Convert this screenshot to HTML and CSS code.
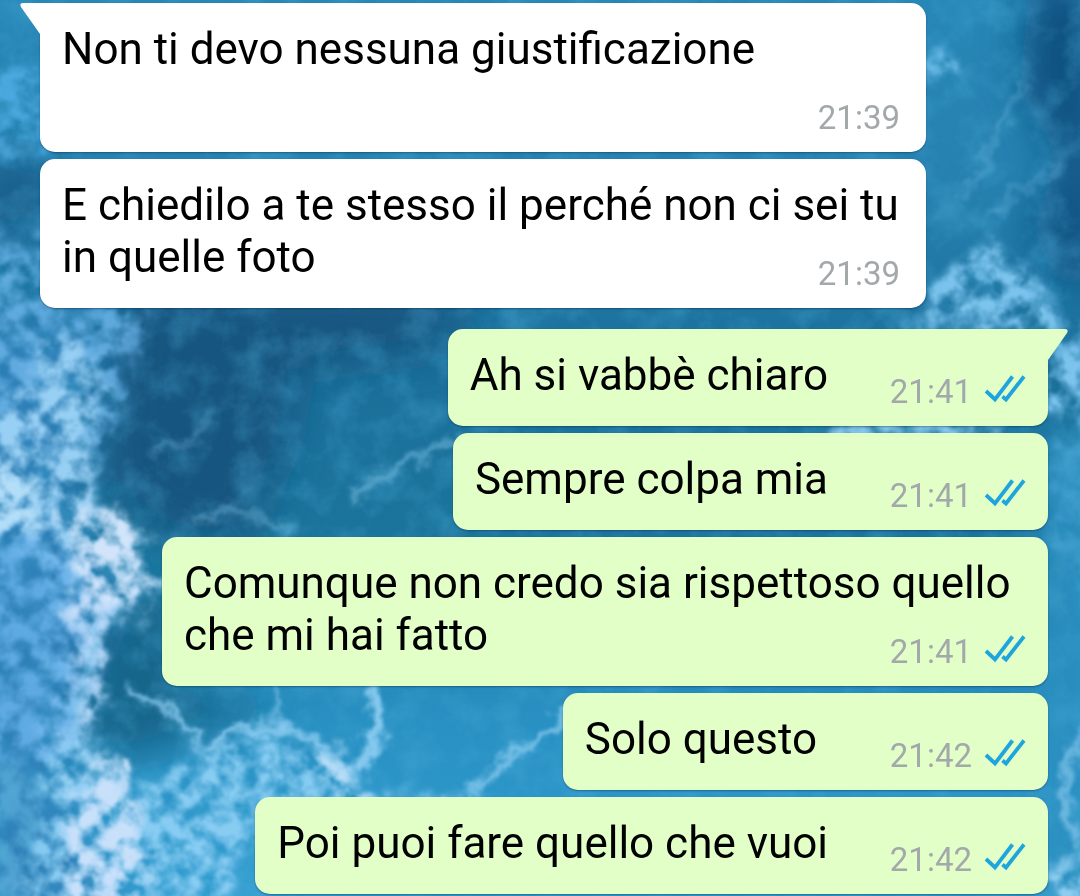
FILE: index.html
```html
<!DOCTYPE html>
<html lang="it">
<head>
    <meta charset="UTF-8">
    <meta name="viewport" content="width=device-width, initial-scale=1.0">
    <title>Chat</title>
    <link rel="stylesheet" href="styles.css">
</head>
<body>
    <!-- Sea wallpaper -->
    <svg class="wallpaper" viewBox="0 0 1080 896" preserveAspectRatio="xMidYMid slice" aria-hidden="true">
        <defs>
            <linearGradient id="sea" x1="0" y1="0" x2="0" y2="1">
                <stop offset="0" stop-color="#2787b6"/>
                <stop offset="0.2" stop-color="#2681b0"/>
                <stop offset="0.4" stop-color="#1b709b"/>
                <stop offset="0.6" stop-color="#1b749c"/>
                <stop offset="0.8" stop-color="#2890c2"/>
                <stop offset="1" stop-color="#329dd0"/>
            </linearGradient>
            <filter id="soft" x="-30%" y="-30%" width="160%" height="160%">
                <feGaussianBlur stdDeviation="22"/>
            </filter>
            <filter id="grain" x="0" y="0" width="100%" height="100%" color-interpolation-filters="sRGB">
                <feTurbulence type="fractalNoise" baseFrequency="0.03" numOctaves="5" seed="8"/>
                <feColorMatrix values="0 0 0 0 0.3  0 0 0 0 0.68  0 0 0 0 0.85  1.6 0 0 0 -0.65"/>
            </filter>
            <filter id="foam" filterUnits="userSpaceOnUse" x="-60" y="-60" width="1200" height="1020" color-interpolation-filters="sRGB">
                <feTurbulence type="fractalNoise" baseFrequency="0.03" numOctaves="5" seed="4" result="warp"/>
                <feGaussianBlur in="SourceGraphic" stdDeviation="7" result="shape"/>
                <feDisplacementMap in="shape" in2="warp" scale="50" xChannelSelector="R" yChannelSelector="G" result="torn"/>
                <feTurbulence type="fractalNoise" baseFrequency="0.05" numOctaves="5" seed="21"/>
                <feColorMatrix values="0 0 0 0 1  0 0 0 0 1  0 0 0 0 1  2.8 0 0 0 -0.8" result="holes"/>
                <feComposite in="torn" in2="holes" operator="in"/>
                <feGaussianBlur stdDeviation="1"/>
            </filter>
            <filter id="strand" filterUnits="userSpaceOnUse" x="-60" y="-60" width="1200" height="1020" color-interpolation-filters="sRGB">
                <feTurbulence type="fractalNoise" baseFrequency="0.05" numOctaves="4" seed="9" result="warp"/>
                <feGaussianBlur in="SourceGraphic" stdDeviation="3" result="line"/>
                <feDisplacementMap in="line" in2="warp" scale="28" xChannelSelector="R" yChannelSelector="G"/>
                <feGaussianBlur stdDeviation="1"/>
            </filter>
        </defs>
        <rect width="1080" height="896" fill="url(#sea)"/>
        <g filter="url(#soft)">
            <path d="M125 290 L480 290 440 350 300 370 290 440 250 540 170 540 100 480Z" fill="#12547f"/>
            <path d="M1030 -20 L1100 -20 1100 290 1060 280 1030 230 1060 160 1020 90Z" fill="#11507f"/>
            <path d="M100 590 L170 590 190 690 280 700 240 720 130 760 75 750Z" fill="#14658a"/>
            <path d="M-20 150 L50 160 50 230 -20 240Z" fill="#145c88"/>
            <path d="M-20 320 L100 320 70 500 110 600 50 760 120 920 -20 920Z" fill="#2e80b8"/>
            <path d="M1040 440 H1100 V920 H1040Z" fill="#2b8fc0"/>
        </g>
        <rect width="1080" height="896" filter="url(#grain)" opacity="0.5"/>
        <g filter="url(#foam)">
            <path d="M-20 75 L60 65 60 150 -20 165Z" fill="#54b0e8" opacity="0.8"/>
            <path d="M-20 230 L50 240 60 310 150 300 135 350 115 410 100 480 -20 500Z" fill="#68b2e6" opacity="0.85"/>
            <path d="M20 400 L60 330 95 360 95 440 95 510 135 535 160 575 130 610 115 640 95 730 70 790 30 760 50 690 60 600 10 560 -20 500 -20 420Z" fill="#98cff4"/>
            <path d="M-20 520 L90 550 90 690 60 760 -20 760Z" fill="#66b0e8" opacity="0.85"/>
            <path d="M-20 760 L40 770 60 900 -20 910Z" fill="#6cc0e8" opacity="0.5"/>
            <path d="M50 760 L110 755 140 800 230 740 270 730 330 750 375 790 390 800 460 790 490 820 270 820 220 910 20 920 40 830Z" fill="#88ccf2"/>
            <path d="M960 260 Q990 230 1020 255 L1050 310 1085 350 1085 430 1040 400 1030 330 900 335Z" fill="#7cc4ee"/>
            <path d="M925 50 L955 55 950 90 925 85Z" fill="#74c2ee"/>
            <path d="M1045 430 L1090 440 1090 620 1060 560Z" fill="#4fa8d8" opacity="0.6"/>
            <path d="M820 415 H1000 V440 H820Z" fill="#8fcdf0"/>
            <path d="M1045 870 L1090 850 1090 910 1045 910Z" fill="#8fcdf0"/>
        </g>
        <g filter="url(#foam)">
            <path d="M75 510 Q125 510 155 555 Q165 590 120 605 L70 615Z" fill="#d2e4fa"/>
            <path d="M80 600 L118 600 105 660 95 720 70 730Z" fill="#bcd8f8"/>
            <path d="M80 765 L120 755 145 830 140 920 70 920 65 830Z" fill="#c9e0fa"/>
            <path d="M320 745 L365 785 370 805 300 780Z" fill="#bfe0f8"/>
            <path d="M-20 460 L30 470 40 530 -20 540Z" fill="#b4def8"/>
        </g>
        <g filter="url(#strand)" fill="none" stroke="#8acbf0" stroke-width="7" stroke-linecap="round">
            <path d="M350 500 Q380 470 460 440" opacity="0.6"/>
            <path d="M150 448 Q190 460 210 415" opacity="0.4" stroke-width="5"/>
            <path d="M190 520 Q230 500 290 530" opacity="0.45"/>
            <path d="M130 690 Q180 710 200 745"/>
            <path d="M210 745 Q260 705 330 750" stroke-width="8"/>
            <path d="M275 690 L278 725" opacity="0.7"/>
            <path d="M375 690 Q385 720 360 770" stroke-width="13"/>
            <path d="M470 795 Q510 750 580 710"/>
            <path d="M965 200 Q1000 130 1022 85" opacity="0.4" stroke-width="5"/>
            <path d="M990 215 Q1020 190 1060 165" opacity="0.35" stroke-width="5"/>
            <path d="M1085 730 Q1050 790 1075 840" stroke-width="10" opacity="0.7"/>
            <path d="M95 620 Q85 690 70 740" opacity="0.8"/>
        </g>
    </svg>

    <!-- Icons -->
    <svg class="icon-defs" width="0" height="0" aria-hidden="true">
        <symbol id="ticks" viewBox="0 0 42 28">
            <path d="M2 16 L11 24.5 L28.5 1.5 M18.5 21.5 L22 24.5 L40 1.5" fill="none" stroke="#1fa5dd" stroke-width="3.8"/>
        </symbol>
        <symbol id="tail" viewBox="0 0 20 31">
            <path d="M20 0 H3 Q-1 0 1 4 L20 31Z" fill="currentColor"/>
        </symbol>
    </svg>

    <main class="chat">
        <section class="group incoming">
            <article class="bubble">
                <svg class="tail"><use href="#tail"/></svg>
                <div class="text">Non ti devo nessuna giustificazione<span class="meta"><time>21:39</time></span></div>
            </article>
            <article class="bubble">
                <div class="text">E chiedilo a te stesso il perché non ci sei tu in quelle foto<span class="meta"><time>21:39</time></span></div>
            </article>
        </section>

        <section class="group outgoing">
            <article class="bubble">
                <svg class="tail"><use href="#tail"/></svg>
                <div class="text">Ah si vabbè chiaro<span class="meta"><time>21:41</time><svg class="ticks"><use href="#ticks"/></svg></span></div>
            </article>
            <article class="bubble">
                <div class="text">Sempre colpa mia<span class="meta"><time>21:41</time><svg class="ticks"><use href="#ticks"/></svg></span></div>
            </article>
            <article class="bubble">
                <div class="text">Comunque non credo sia rispettoso quello che mi hai fatto<span class="meta"><time>21:41</time><svg class="ticks"><use href="#ticks"/></svg></span></div>
            </article>
            <article class="bubble">
                <div class="text">Solo questo&nbsp;<span class="meta"><time>21:42</time><svg class="ticks"><use href="#ticks"/></svg></span></div>
            </article>
            <article class="bubble">
                <div class="text">Poi puoi fare quello che vuoi<span class="meta"><time>21:42</time><svg class="ticks"><use href="#ticks"/></svg></span></div>
            </article>
        </section>
    </main>
</body>
</html>
```

FILE: styles.css
```css
:root {
    --incoming: #ffffff;
    --outgoing: #e1ffc7;
    --time: #a3a8ab;
}

* {
    box-sizing: border-box;
}

body {
    margin: 0;
    min-height: 100vh;
    background: #1d76a5;
    font-family: Roboto, "Liberation Sans", sans-serif;
    color: #000;
}

.wallpaper {
    position: fixed;
    top: 0;
    left: 0;
    width: 100%;
    height: 100%;
    z-index: -1;
}

.icon-defs {
    position: absolute;
}

/* Message list */
.chat {
    display: flex;
    flex-direction: column;
    gap: 21px;
    padding: 3px 32px 2px 40px;
}

.group {
    display: flex;
    flex-direction: column;
    gap: 7px;
}

.incoming {
    align-items: flex-start;
    color: var(--incoming);
}

.outgoing {
    align-items: flex-end;
    color: var(--outgoing);
}

/* Bubbles */
.bubble {
    position: relative;
    max-width: calc(100% - 122px);
    padding: 20px 22px 14px;
    border-radius: 15px;
    background: currentColor;
    box-shadow: 0 1px 2px rgba(0, 30, 60, 0.4);
}

.incoming .bubble:first-child {
    border-top-left-radius: 0;
}

.outgoing .bubble:first-child {
    border-top-right-radius: 0;
}

.tail {
    position: absolute;
    top: 0;
    left: -20px;
    width: 20px;
    height: 31px;
}

.outgoing .tail {
    left: auto;
    right: -20px;
    transform: scaleX(-1);
}

.text {
    display: flow-root;
    font-size: 44px;
    line-height: 52px;
    color: #000;
}

/* Sits at the end of the last line, or drops below it */
.meta {
    float: right;
    display: flex;
    justify-content: flex-end;
    align-items: center;
    gap: 12px;
    width: 198px;
    height: 40px;
    margin-top: 23px;
    font-size: 33px;
    line-height: 40px;
    color: var(--time);
}

.incoming .meta {
    width: 156px;
    padding-right: 4px;
}

.ticks {
    width: 42px;
    height: 28px;
    margin-bottom: 6px;
}
```
